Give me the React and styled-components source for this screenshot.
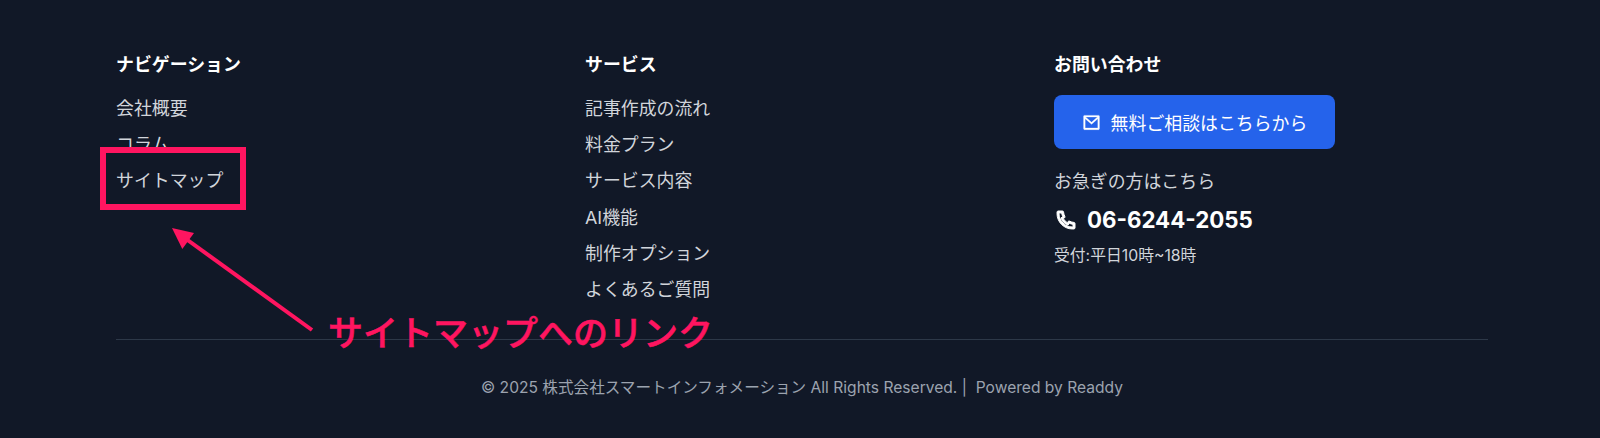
import React from "react";
import styled, { createGlobalStyle } from "styled-components";
import { RiMailLine, RiPhoneLine } from "react-icons/ri";

const Global = createGlobalStyle`
  html, body { margin: 0; padding: 0; background: #111827; }
  body { font-family: Inter, "Noto Sans CJK JP", sans-serif; }
`;

const Footer = styled.footer`
  position: relative;
  box-sizing: border-box;
  width: 1600px;
  height: 438px;
  padding: 52px 112px 0 116px;
  background: #111827;
  overflow: hidden;
`;

const Columns = styled.div`
  display: grid;
  grid-template-columns: repeat(3, 1fr);
  column-gap: 35px;
  height: 288px;
  box-sizing: border-box;
  border-bottom: 1px solid #2d3848;
`;

const Heading = styled.h3`
  margin: 0 0 17px;
  font-size: 17.9px;
  line-height: 26px;
  font-weight: 700;
  color: #ffffff;
`;

const LinkList = styled.ul`
  list-style: none;
  margin: 0;
  padding: 0;
  display: flex;
  flex-direction: column;
  gap: 9.2px;
`;

const LinkItem = styled.li`
  font-size: 17.9px;
  line-height: 27px;
  color: #d1d5db;
`;

const ContactButton = styled.a`
  display: flex;
  align-items: center;
  justify-content: center;
  gap: 10px;
  box-sizing: border-box;
  width: 281px;
  height: 54px;
  margin-top: 17px;
  border-radius: 8px;
  background: #2563eb;
  color: #ffffff;
  font-size: 17.9px;

  svg {
    stroke: currentColor;
    stroke-width: 0.4px;
  }
`;

const UrgentText = styled.p`
  margin: 19px 0 0;
  font-size: 17.9px;
  line-height: 27px;
  color: #d1d5db;
`;

const PhoneRow = styled.div`
  display: flex;
  align-items: center;
  gap: 9px;
  margin-top: 10px;
  color: #ffffff;
  font-size: 22.3px;
  line-height: 30px;
  font-weight: 700;

  svg {
    stroke: currentColor;
    stroke-width: 1px;
  }
`;

const Hours = styled.p`
  margin: 10px 0 0;
  font-size: 15.8px;
  line-height: 22px;
  color: #d1d5db;
`;

const Copyright = styled.p`
  margin: 37px 0 0;
  text-align: center;
  font-size: 15.6px;
  line-height: 22px;
  color: #9ca3af;
  white-space: pre;
`;

// screenshot annotation drawn on top of the footer
const MarkerBox = styled.div`
  position: absolute;
  left: 100px;
  top: 147px;
  width: 146px;
  height: 63px;
  box-sizing: border-box;
  border: 6.5px solid #ff1560;
`;

const MarkerLabel = styled.div`
  position: absolute;
  left: 328px;
  top: 310px;
  font-size: 35px;
  line-height: 46px;
  font-weight: 500;
  -webkit-text-stroke: 0.5px #ff1560;
  color: #ff1560;
  white-space: nowrap;
`;

const MarkerArrow = styled.svg`
  position: absolute;
  left: 160px;
  top: 220px;
`;

const navLinks = ["会社概要", "コラム", "サイトマップ"];
const serviceLinks = ["記事作成の流れ", "料金プラン", "サービス内容", "AI機能", "制作オプション", "よくあるご質問"];

export default function App() {
  return (
    <Footer>
      <Global />
      <Columns>
        <div>
          <Heading>ナビゲーション</Heading>
          <LinkList>
            {navLinks.map((label) => (
              <LinkItem key={label}>{label}</LinkItem>
            ))}
          </LinkList>
        </div>
        <div>
          <Heading>サービス</Heading>
          <LinkList>
            {serviceLinks.map((label) => (
              <LinkItem key={label}>{label}</LinkItem>
            ))}
          </LinkList>
        </div>
        <div>
          <Heading>お問い合わせ</Heading>
          <ContactButton>
            <RiMailLine size={19} />
            無料ご相談はこちらから
          </ContactButton>
          <UrgentText>お急ぎの方はこちら</UrgentText>
          <PhoneRow>
            <RiPhoneLine size={24} />
            06-6244-2055
          </PhoneRow>
          <Hours>受付:平日10時~18時</Hours>
        </div>
      </Columns>
      <Copyright>© 2025 株式会社スマートインフォメーション All Rights Reserved. |  Powered by Readdy</Copyright>
      <MarkerBox />
      <MarkerArrow width="160" height="120" viewBox="0 0 160 120">
        <path d="M152 110 L22 16" stroke="#ff1560" strokeWidth="4" fill="none" />
        <path d="M12 8 L34 13 L22.300 29 Z" fill="#ff1560" />
      </MarkerArrow>
      <MarkerLabel>サイトマップへのリンク</MarkerLabel>
    </Footer>
  );
}
